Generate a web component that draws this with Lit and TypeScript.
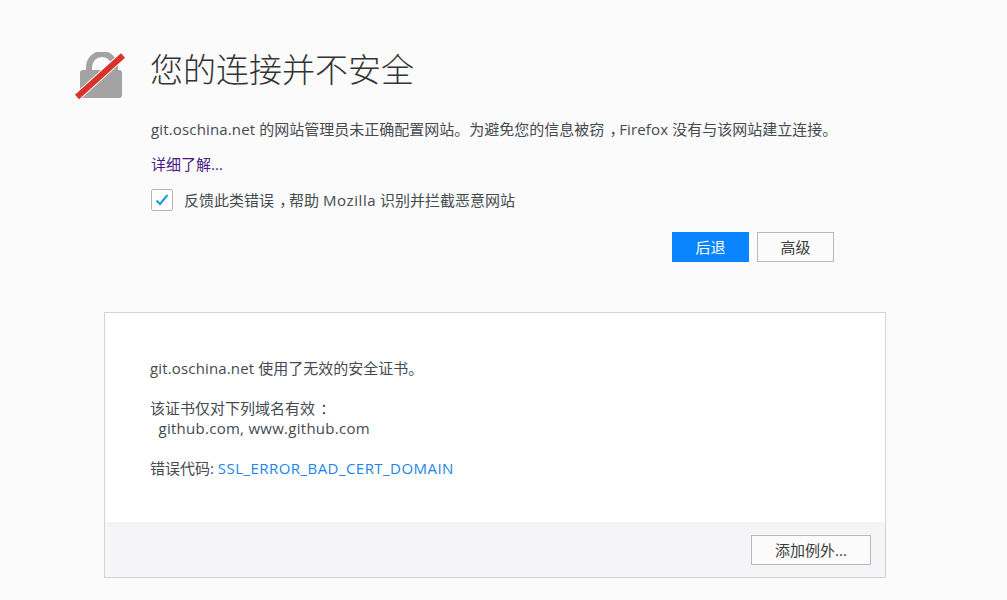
import { LitElement, html, css } from "lit";
import { customElement } from "lit/decorators.js";

@customElement("app-root")
export class AppRoot extends LitElement {
  static styles = css`
    :host {
      display: block;
      height: 600px;
      overflow: hidden;
      background: #fbfbfb;
      color: #454a50;
      font-family: "Open Sans", "Noto Sans CJK SC", sans-serif;
      font-size: 15px;
      line-height: 20px;
    }
    .top {
      display: flex;
      width: 759px;
      margin-left: 75px;
      padding-top: 50px;
      gap: 27px;
    }
    .icon { width: 50px; height: 50px; flex: none; margin-top: 2px; margin-right: -1px; }
    .main { flex: 1; min-width: 0; }
    h1 {
      margin: 0;
      font-size: 33px;
      font-weight: 300;
      line-height: 40px;
      color: #333;
      margin-left: -1px;
    }
    .desc { margin: 29px 0 0; white-space: nowrap; }
    .learn { display: block; margin-top: 15px; color: #4c1a86; text-decoration: none; }
    .report { display: flex; align-items: center; gap: 11px; margin-top: 15px; }
    .check {
      width: 22px;
      height: 22px;
      box-sizing: border-box;
      border: 1px solid #b5b5b5;
      border-radius: 2px;
      background: #fff;
      display: flex;
      align-items: center;
      justify-content: center;
    }
    .mark { margin-left: 0.35em; letter-spacing: -0.35em; }
    .host-name { letter-spacing: 0.15px; }
    .browser { letter-spacing: 0.15px; }
    .brand { letter-spacing: 0.57px; }
    .actions { display: flex; justify-content: flex-end; gap: 8px; margin-top: 21px; }
    .btn {
      box-sizing: border-box;
      width: 77px;
      height: 30px;
      display: flex;
      align-items: center;
      justify-content: center;
      font-size: 15px;
      border: 1px solid #b9b9b9;
      color: #3c3c3c;
      background: #fbfbfb;
    }
    .primary { background: #0a84ff; border-color: #0a84ff; color: #fff; }
    .panel {
      box-sizing: border-box;
      width: 782px;
      height: 266px;
      margin: 50px 0 0 104px;
      border: 1px solid #d4d4d4;
      background: #fff;
      display: flex;
      flex-direction: column;
    }
    .content { flex: 1; padding: 45px 45px 0; }
    .content p { margin: 0 0 20px; }
    .domain { padding-left: 8.5px; letter-spacing: 0.27px; }
    .code { color: #1e85e6; text-decoration: none; letter-spacing: 0.45px; }
    .footer {
      height: 55px;
      background: #f5f5f7;
      display: flex;
      justify-content: flex-end;
      padding: 13px 14px 0 0;
      box-sizing: border-box;
    }
    .exception { width: 120px; background: #fbfbfb; }
  `;

  render() {
    return html`
      <div class="top">
        <svg class="icon" viewBox="0 0 50 50" aria-hidden="true">
          <path d="M14 19v-4a13 13 0 0 1 26 0v4" fill="none" stroke="#a3a3a3" stroke-width="6"/>
          <rect x="5" y="18" width="42" height="28" rx="3" fill="#a3a3a3"/>
          <path d="M2 45 48 3.5" stroke="#fbfbfb" stroke-width="8"/>
          <path d="M2 45 48 3.5" stroke="#da3129" stroke-width="6"/>
        </svg>
        <div class="main">
          <h1>您的连接并不安全</h1>
          <p class="desc"><span class="host-name">git.oschina.net</span> 的网站管理员未正确配置网站。为避免您的信息被窃<span class="mark">，</span><span class="browser">Firefox</span> 没有与该网站建立连接。</p>
          <a class="learn" href="#">详细了解...</a>
          <div class="report">
            <span class="check">
              <svg width="14" height="12" viewBox="0 0 14 12" aria-hidden="true">
                <path d="M1.5 6.5 5 10l7.5-9" fill="none" stroke="#2a9fd6" stroke-width="2.2"/>
              </svg>
            </span>
            <span>反馈此类错误<span class="mark">，</span>帮助 <span class="brand">Mozilla</span> 识别并拦截恶意网站</span>
          </div>
          <div class="actions">
            <div class="btn primary">后退</div>
            <div class="btn">高级</div>
          </div>
        </div>
      </div>
      <section class="panel">
        <div class="content">
          <p><span class="host-name">git.oschina.net</span> 使用了无效的安全证书。</p>
          <p>该证书仅对下列域名有效<span class="mark">：</span><br /><span class="domain">github.com, www.github.com</span></p>
          <p>错误代码: <a class="code" href="#">SSL_ERROR_BAD_CERT_DOMAIN</a></p>
        </div>
        <div class="footer"><div class="btn exception">添加例外...</div></div>
      </section>
    `;
  }
}
